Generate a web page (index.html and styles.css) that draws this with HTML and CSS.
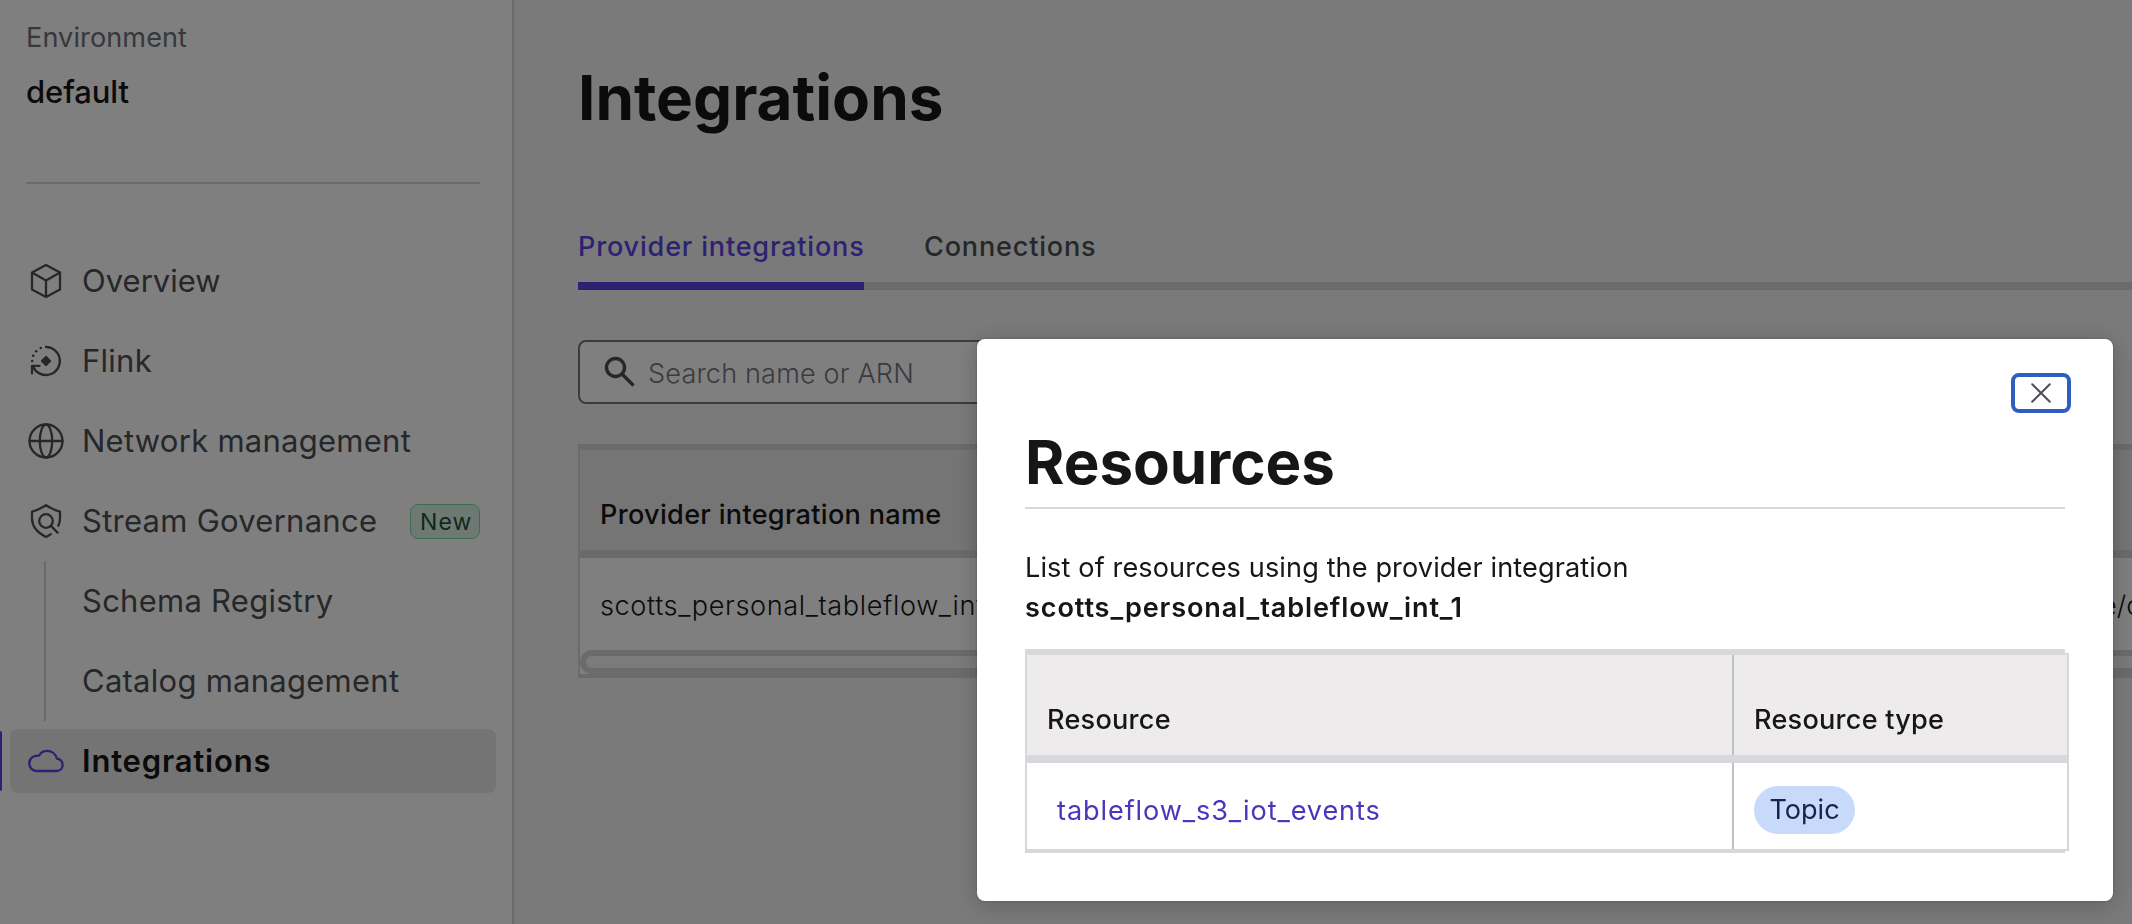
FILE: index.html
```
<!DOCTYPE html>
<html lang="en">
<head>
<meta charset="utf-8">
<title>Integrations</title>
<link rel="stylesheet" href="styles.css">
</head>
<body>
<div class="app">
  <aside class="sidebar">
    <div class="environment">
      <div class="environment-label">Environment</div>
      <div class="environment-name">default</div>
    </div>
    <nav class="nav">
      <a class="nav-item nav-item-short">
        <svg class="icon" viewBox="0 0 36 36"><path d="M18 2 32 9.6V26.6L18 34 4 26.6V9.6ZM4 9.6 18 17.4 32 9.6M18 17.4V34"/></svg>
        <span>Overview</span>
      </a>
      <a class="nav-item">
        <svg class="icon" viewBox="0 0 36 36"><path d="M18 4A14 14 0 1 1 5 23.5M11.6 22.8H4V30.4"/><path class="solid" d="M18 14 22 18 18 22 14 18Z"/><g class="dots"><circle cx="12.8" cy="5"/><circle cx="8.2" cy="8.2"/><circle cx="5.2" cy="12.8"/><circle cx="4.2" cy="18"/></g></svg>
        <span>Flink</span>
      </a>
      <a class="nav-item">
        <svg class="icon" viewBox="0 0 36 36"><circle cx="18" cy="18" r="16.5"/><ellipse cx="18" cy="18" rx="6.2" ry="16.5"/><path d="M1.5 18H34.5"/></svg>
        <span>Network management</span>
      </a>
      <a class="nav-item">
        <svg class="icon" viewBox="0 0 36 36"><path d="M22.8 31.2C21.2 32.4 19.6 33.4 18 34 10 30 4 24 4 15.500V8.600C9.500 7.400 13.500 5 18 2.200 22.500 5 26.500 7.400 32 8.600V15.500C32 18.200 31.400 20.600 30.400 22.800"/><circle cx="18" cy="18" r="6.800"/><path d="M22.900 22.900 29.600 29.600"/></svg>
        <span>Stream Governance</span>
        <span class="badge">New</span>
      </a>
      <div class="subnav">
        <a class="nav-item">Schema Registry</a>
        <a class="nav-item">Catalog management</a>
      </div>
      <a class="nav-item nav-item-active">
        <svg class="icon" viewBox="0 0 36 36"><path d="M8.700 28H28.500C32 28 34.600 25.400 34.600 22 34.600 18.800 32.200 16.300 29 15.700 27.800 11 23.900 7.900 19.200 7.900 15.600 7.900 12.800 9.500 11 12.700 5.500 12.100 1.300 15.400 1.300 20.500 1.300 24.800 4.500 28 8.700 28Z"/></svg>
        <span>Integrations</span>
      </a>
    </nav>
  </aside>

  <main class="main">
    <h1 class="page-title">Integrations</h1>
    <div class="tabs">
      <a class="tab tab-active">Provider integrations</a>
      <a class="tab">Connections</a>
    </div>
    <div class="search">
      <svg class="search-icon" viewBox="0 0 32 32"><circle cx="11.500" cy="11.500" r="9"/><path d="M18 18 29.500 29.500"/></svg>
      <span class="search-text">Search name or ARN</span>
    </div>
    <div class="table">
      <div class="table-head">Provider integration name</div>
      <div class="table-row">
        <span class="cell-name">scotts_personal_tableflow_int_1</span>
        <span class="cell-role">e/c</span>
      </div>
      <div class="scrollbar"></div>
    </div>
  </main>
</div>

<div class="overlay">
  <section class="modal">
    <div class="modal-bar">
      <button class="close" aria-label="Close"><svg viewBox="0 0 20 20"><path d="M1.200 1.200 18.800 18.800M18.800 1.200 1.200 18.800"/></svg></button>
    </div>
    <h2 class="modal-title">Resources</h2>
    <p class="description">List of resources using the provider integration<br><strong>scotts_personal_tableflow_int_1</strong></p>
    <div class="resources">
      <div class="resource-grid">
        <div class="resource-head">Resource</div>
        <div class="resource-head divided">Resource type</div>
        <div class="resource-cell"><a class="topic-link">tableflow_s3_iot_events</a></div>
        <div class="resource-cell divided"><span class="pill">Topic</span></div>
      </div>
    </div>
  </section>
</div>
</body>
</html>
```
FILE: styles.css
```
* {
  box-sizing: border-box;
}

body {
  margin: 0;
  height: 924px;
  overflow: hidden;
  background: #f5f5f5;
  color: #161617;
  font-family: Inter, "Liberation Sans", sans-serif;
  font-size: 27.1px;
}

.app {
  display: flex;
  height: 924px;
}

/* Sidebar */

.sidebar {
  flex: none;
  width: 514px;
  padding: 20px 16px 0 0;
  background: #fff;
  border-right: 2px solid #d7d7d9;
}

.environment {
  height: 164px;
  margin: 0 16px 65px 26px;
  border-bottom: 2px solid #d7d7d9;
}

.environment-label {
  line-height: 36px;
  letter-spacing: 0.09px;
  color: #6e6f78;
}

.environment-name {
  margin-top: 16px;
  font-size: 31px;
  font-weight: 500;
  line-height: 40px;
  letter-spacing: -0.1px;
}

.nav {
  display: flex;
  flex-direction: column;
  gap: 16px;
}

.nav-item {
  position: relative;
  display: flex;
  align-items: center;
  height: 64px;
  margin-left: 10px;
  padding: 0 16px 0 18px;
  border-radius: 8px;
  color: #4c4e53;
  font-size: 31px;
  line-height: 36px;
  letter-spacing: 0.26px;
}

.nav-item-short {
  letter-spacing: 0.02px;
}

.icon {
  width: 36px;
  height: 36px;
  margin-right: 18px;
  fill: none;
  stroke: currentColor;
  stroke-width: 2.3;
  stroke-linecap: round;
  stroke-linejoin: round;
}

.icon .solid {
  fill: currentColor;
}

.icon .dots {
  fill: currentColor;
  stroke: none;
}

.icon .dots circle {
  r: 1.3px;
}

.badge {
  width: 70px;
  height: 35px;
  margin-left: auto;
  padding-left: 9px;
  border: 1px solid #7cd8a6;
  border-radius: 8px;
  background: #dbf3e5;
  color: #1f5236;
  font-size: 23px;
  line-height: 34px;
  letter-spacing: 1.1px;
}

.subnav {
  display: flex;
  flex-direction: column;
  gap: 16px;
  margin: -8px 0 -8px 44px;
  padding: 8px 0;
  border-left: 2px solid #d7d7d9;
}

.subnav .nav-item {
  margin-left: 18px;
}

.nav-item-active {
  background: #e9e9e9;
  color: #161617;
  font-weight: 600;
  letter-spacing: 0.8px;
}

.nav-item-active .icon {
  color: #5c42e8;
}

.nav-item-active::before {
  content: "";
  position: absolute;
  top: 2px;
  bottom: 2px;
  left: -10px;
  width: 2px;
  border-radius: 0 2px 2px 0;
  background: #5c42e8;
}

/* Page content */

.main {
  flex: 1;
  min-width: 0;
  padding: 60px 0 0 64px;
}

.page-title {
  margin: 0 0 90px;
  font-size: 62px;
  font-weight: 700;
  line-height: 76px;
}

.tabs {
  display: flex;
  height: 64px;
  border-bottom: 8px solid #d7d7d9;
}

.tab {
  height: 64px;
  margin-right: 60px;
  color: #4c4e53;
  font-weight: 500;
  line-height: 42px;
  letter-spacing: 0.8px;
  white-space: nowrap;
}

.tab-active {
  width: 286px;
  border-bottom: 8px solid #5c42e8;
  color: #5c42e8;
}

.search {
  display: flex;
  align-items: center;
  width: 800px;
  height: 64px;
  margin-top: 50px;
  padding-left: 24px;
  border: 2px solid #76777f;
  border-radius: 8px;
  background: #fff;
  color: #76777f;
  font-weight: 300;
  letter-spacing: 0.15px;
}

.search-text {
  padding-top: 2px;
}

.search-icon {
  width: 32px;
  height: 32px;
  margin-right: 12px;
  fill: none;
  stroke: #4c4e53;
  stroke-width: 3.4;
}

.table {
  height: 234px;
  margin-top: 40px;
  border-style: solid;
  border-color: #d7d7d9;
  border-width: 6px 0 4px 2px;
  background: #fff;
}

.table-head {
  height: 108px;
  padding: 45px 0 0 20px;
  border-bottom: 8px solid #d7d7d9;
  background: #ebeaea;
  font-weight: 500;
  line-height: 40px;
  letter-spacing: 0.3px;
}

.table-row {
  display: flex;
  align-items: center;
  height: 92px;
  padding: 2px 0 0 20px;
  font-weight: 300;
  white-space: nowrap;
}

.cell-name {
  flex: none;
  width: 1501px;
  letter-spacing: 0.62px;
}

.scrollbar {
  height: 24px;
  margin-right: -20px;
  border: 6px solid #d7d7d9;
  border-radius: 12px;
  background: #f7f7f7;
}

/* Dialog */

.overlay {
  position: fixed;
  inset: 0;
  padding: 339px 0 0 977px;
  background: rgba(0, 0, 0, 0.5);
}

.modal {
  width: 1136px;
  height: 562px;
  padding: 34px 42px 0 48px;
  border-radius: 8px;
  background: #fff;
  box-shadow: 0 4px 24px rgba(0, 0, 0, 0.22), 0 0 3px rgba(0, 0, 0, 0.2);
}

.modal-bar {
  display: flex;
  justify-content: flex-end;
}

.close {
  display: flex;
  align-items: center;
  justify-content: center;
  width: 60px;
  height: 40px;
  padding: 0;
  border: 4px solid #2e5fbe;
  border-radius: 8px;
  background: #fff;
}

.close svg {
  width: 20px;
  height: 20px;
  fill: none;
  stroke: #4c4e58;
  stroke-width: 2;
  stroke-linecap: round;
}

.modal-title {
  width: 1040px;
  height: 96px;
  margin: 0;
  padding-top: 13px;
  border-bottom: 2px solid #d8d8d9;
  font-size: 60px;
  font-weight: 700;
  line-height: 72px;
}

.description {
  height: 140px;
  margin: 0;
  padding-top: 39px;
  line-height: 40px;
  letter-spacing: 0.12px;
}

.description strong {
  font-weight: 600;
  letter-spacing: 0.88px;
}

.resources {
  width: 1040px;
  height: 204px;
  border-style: solid;
  border-color: #d8d8db;
  border-width: 6px 0 4px;
}

.resource-grid {
  position: relative;
  display: grid;
  grid-template-columns: 707px 333px;
  grid-template-rows: 108px 86px;
  width: 1044px;
  height: 198px;
  margin-top: -2px;
  border: 2px solid #d8d8db;
}

.resource-head {
  padding: 45px 0 0 20px;
  border-bottom: 8px solid #d8d7dc;
  background: #edebec;
  font-weight: 500;
  line-height: 40px;
  letter-spacing: 0.24px;
}

.resource-cell {
  display: flex;
  align-items: center;
  padding: 9px 0 0 30px;
}

.divided {
  position: relative;
  padding-left: 20px;
}

.divided::before {
  content: "";
  position: absolute;
  top: 0;
  bottom: 0;
  left: -2px;
  width: 2px;
  background: #bfbfc6;
}

.topic-link {
  color: #4a36bd;
  letter-spacing: 0.9px;
}

.resource-cell.divided {
  padding-top: 8px;
}

.pill {
  width: 101px;
  height: 48px;
  border-radius: 24px;
  background: #c8dafa;
  color: #13244f;
  line-height: 48px;
  text-align: center;
}
```
